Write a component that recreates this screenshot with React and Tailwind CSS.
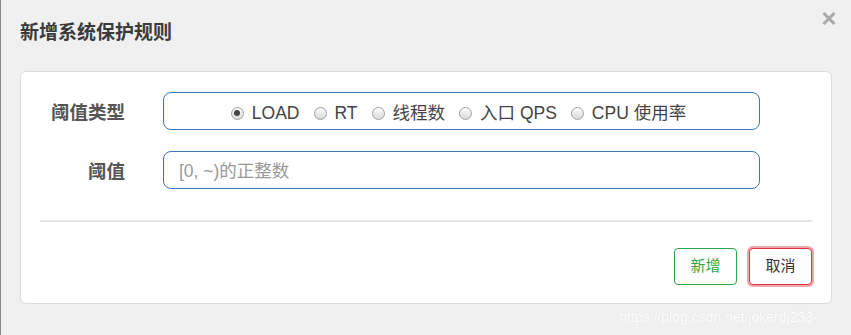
import React from "react";

const font = { fontFamily: '"Liberation Sans", "Noto Sans CJK SC", sans-serif' };

function Radio({ checked, label }) {
  return (
    <span className="flex items-center">
      <span className="flex h-[13px] w-[13px] items-center justify-center rounded-full border border-[#a0a0a0] bg-gradient-to-b from-[#fdfdfd] to-[#d9d9d9]">
        {checked && <span className="h-[6px] w-[6px] rounded-full bg-[#454545]" />}
      </span>
      <span className="ml-[8px]">{label}</span>
    </span>
  );
}

export default function App() {
  return (
    <div
      className="relative h-[335px] w-[851px] overflow-hidden border-l border-[#8a8a8a] bg-[#f0f0f0]"
      style={font}
    >
      <div className="flex h-[71px] items-start justify-between pl-[19px] pr-[15px]">
        <div className="mt-[21px] text-[19px] font-bold leading-[24px] text-[#3a3a3a]">
          新增系统保护规则
        </div>
        <svg className="mt-[12px]" width="14" height="13" viewBox="0 0 14 13">
          <path d="M1.5 1 L12.5 12 M12.5 1 L1.5 12" stroke="#a9a9a9" strokeWidth="3" />
        </svg>
      </div>

      <div className="mx-[19px] h-[233px] rounded-[6px] border border-[#dcdcdc] bg-white px-[19px]">
        <div className="flex items-center pt-[20px]">
          <div className="w-[85px] pt-[4px] text-right text-[18.5px] font-bold text-[#555]">阈值类型</div>
          <div className="ml-[38px] flex h-[38px] w-[597px] items-center justify-center gap-[14px] rounded-[8px] border border-[#3b78b5] pr-[6px] pt-[4px] text-[17.5px] text-[#444]">
            <Radio checked label="LOAD" />
            <Radio label="RT" />
            <Radio label="线程数" />
            <Radio label="入口 QPS" />
            <Radio label="CPU 使用率" />
          </div>
        </div>
        <div className="mt-[21px] flex items-center">
          <div className="w-[85px] pt-[4px] text-right text-[18.5px] font-bold text-[#555]">阈值</div>
          <div className="ml-[38px] flex h-[38px] w-[597px] items-center rounded-[8px] border border-[#3b78b5] pl-[15px] pt-[3px] text-[17.5px] text-[#999]">
            [0, ~)的正整数
          </div>
        </div>
        <div className="mt-[31px] h-[2px] bg-[#e3e3e3]" />
        <div className="mt-[26px] flex justify-end gap-[12px]">
          <button className="flex h-[37px] w-[63px] items-center justify-center rounded-[4px] border border-[#2ba745] bg-white text-[15px] text-[#2ba745]">
            新增
          </button>
          <button className="flex h-[37px] w-[63px] items-center justify-center rounded-[4px] border border-[#dc3545] bg-white text-[15px] text-[#333] shadow-[0_0_0_2px_rgba(220,53,69,0.45)]">
            取消
          </button>
        </div>
      </div>

      <div className="absolute right-[38px] top-[307px] text-[14px] text-white [text-shadow:0_0_1px_#d6d6d6]">
        https://blog.csdn.net/jokerdj233
      </div>
    </div>
  );
}
